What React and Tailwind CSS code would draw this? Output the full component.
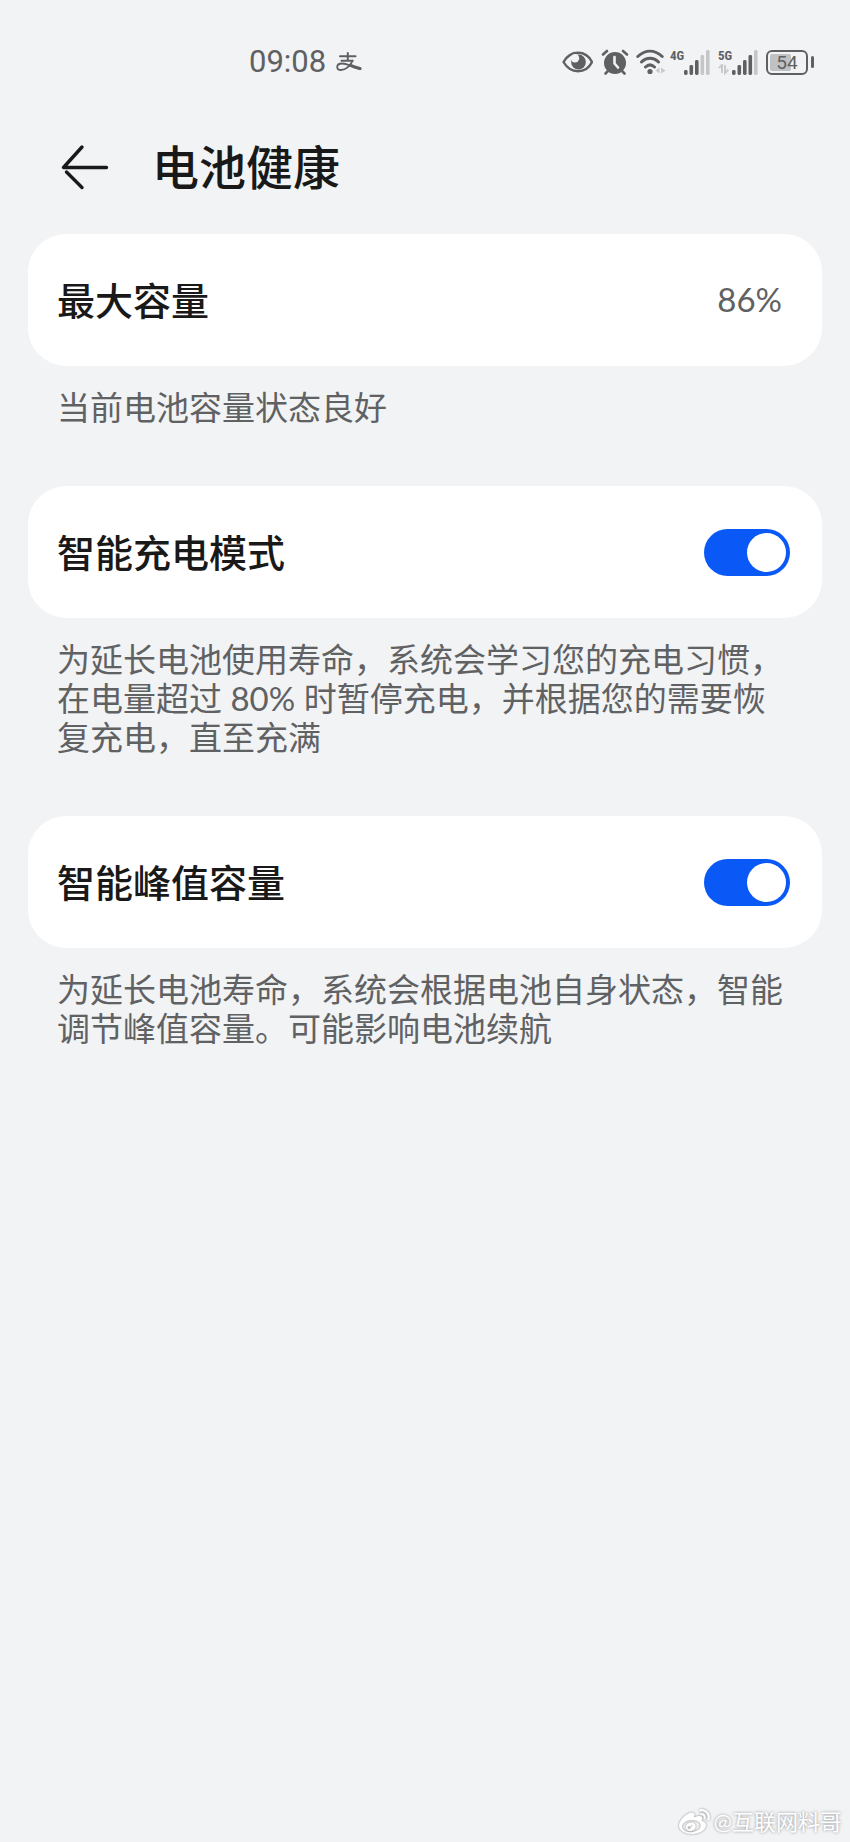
import { useState } from "react";
import { FaWeibo } from "react-icons/fa";

const SignalBars = ({ level }) => (
  <svg
    width="26"
    height="26"
    viewBox="0 0 26 26"
    fill="#5f6062"
    className="shrink-0"
  >
    {[5, 10, 15, 20, 25].map((h, i) => (
      <rect
        key={h}
        x={i * 5.5}
        y={25 - h}
        width="3.6"
        height={h}
        rx="1.4"
        opacity={i < level ? 1 : 0.3}
      />
    ))}
  </svg>
);

const StatusBar = () => (
  <div className="flex h-[124px] items-center justify-between pl-[249px] pr-9 text-[#5f6062]">
    <div className="flex items-center gap-[10px]">
      <span className="font-['Roboto',sans-serif] text-[31px] leading-9">
        09:08
      </span>
      {/* Alipay */}
      <svg
        width="26"
        height="20"
        viewBox="0 0 26 20"
        fill="none"
        stroke="currentColor"
        strokeLinecap="round"
      >
        <path d="M4 4.2H19.5M11.8 1V8.6M5.5 8.7H16.5" strokeWidth="2" />
        <path
          d="M16.6 8.6C14.5 13.5 10 18 5 18C2.6 18 1.2 17 1.2 15C1.2 12.8 3.5 11.5 6.2 11.5C11 11.5 17 15.5 24.5 17"
          strokeWidth="1.8"
        />
        <path d="M14 13.2C17 14.6 20 15.6 24 16.5" strokeWidth="3" />
      </svg>
    </div>

    <div className="flex items-center">
      {/* Eye comfort */}
      <svg width="32" height="24" viewBox="0 0 32 24" fill="none">
        <path
          d="M2.5 12C6 6 11 2.8 17 2.8S28 6 31 12C28 18 23 21.2 17 21.2S6 18 2.5 12Z"
          stroke="currentColor"
          strokeWidth="2.4"
          strokeLinejoin="round"
        />
        <circle cx="17.5" cy="12" r="7.4" fill="currentColor" />
        <circle cx="14" cy="8.2" r="4.2" fill="#f2f3f5" />
      </svg>

      {/* Alarm */}
      <svg width="28" height="28" viewBox="0 0 28 28" className="ml-2">
        <circle cx="14" cy="15" r="11" fill="currentColor" />
        <path
          d="M2 6.5L6 3M26 6.5L22 3M6.5 23.500L4.500 25.500M21.5 23.5L23.5 25.5"
          stroke="currentColor"
          strokeWidth="2.6"
          strokeLinecap="round"
        />
        <path
          d="M13.5 9V15.5L17 19.5"
          fill="none"
          stroke="#f2f3f5"
          strokeWidth="2.6"
          strokeLinecap="round"
          strokeLinejoin="round"
        />
      </svg>

      {/* Wi-Fi */}
      <svg
        width="30"
        height="26"
        viewBox="0 0 30 26"
        fill="none"
        className="ml-[7px]"
      >
        <path
          d="M1.8 7.5C9.5 0.5 18.500 0.5 26.200 7.5M5.500 13C10.500 8 17.5 8 22.500 13M9.500 18C12.500 15.2 15.500 15.2 18.500 18"
          stroke="currentColor"
          strokeWidth="3"
          strokeLinecap="round"
        />
        <circle cx="14" cy="22.500" r="2.600" fill="currentColor" />
        <path
          d="M19.5 21.5L23.500 18.500V24.500ZM29.500 21.500L25 18.500V24.500Z"
          fill="#c9cacc"
        />
      </svg>

      <div className="ml-1 flex h-7 items-end">
        <span className="w-[14px] self-start font-['Roboto_Condensed','Roboto',sans-serif] text-[13px] font-bold leading-4">
          4G
        </span>
        <SignalBars level={3} />
      </div>

      <div className="ml-2 flex h-7 items-end">
        <div className="flex w-[14px] flex-col">
          <span className="font-['Roboto_Condensed','Roboto',sans-serif] text-[13px] font-bold leading-4">
            5G
          </span>
          <svg width="12" height="12" viewBox="0 0 12 12" fill="none">
            <path
              d="M1 4L4 1V9M7 1V9L10.5 5.5"
              stroke="#c9cacc"
              strokeWidth="2"
            />
          </svg>
        </div>
        <SignalBars level={4} />
      </div>

      {/* Battery */}
      <div className="ml-2 flex items-center gap-[3px]">
        <div className="relative h-[25px] w-[42px] overflow-hidden rounded-md border-2 border-[#5f6062]">
          <div
            className="absolute inset-y-[2px] left-[2px] rounded-xs bg-[#c0c1c3]"
            style={{ width: "54%" }}
          />
          <span className="relative block text-center font-['Roboto',sans-serif] text-[19px] leading-[21px]">
            54
          </span>
        </div>
        <div className="h-3 w-[3px] rounded-full bg-[#5f6062]" />
      </div>
    </div>
  </div>
);

const Toggle = ({ id, checked, onChange }) => (
  <input
    id={id}
    type="checkbox"
    role="switch"
    checked={checked}
    onChange={(e) => onChange(e.target.checked)}
    className="h-[47px] w-[86px] shrink-0 cursor-pointer appearance-none rounded-full bg-[#c8c9cc] p-1 transition-colors before:block before:size-[39px] before:rounded-full before:bg-white before:transition-transform checked:bg-[#0a59f7] checked:before:translate-x-[39px]"
  />
);

const Card = ({ children }) => (
  <div className="mx-7 flex h-[132px] items-center justify-between rounded-[38px] bg-white pl-[29px] pr-8 text-[38px] font-medium text-[#191919]">
    {children}
  </div>
);

const Note = ({ children }) => (
  <p className="px-[57px] pb-[59px] pt-[22px] text-[33px] leading-[39px] text-[#606163]">
    {children}
  </p>
);

const App = () => {
  const [smartCharge, setSmartCharge] = useState(true);
  const [peakCapacity, setPeakCapacity] = useState(true);

  return (
    <div
      lang="zh-CN"
      className="flex min-h-screen flex-col bg-[#f2f3f5] font-['Lato','Noto_Sans_CJK_SC',sans-serif]"
    >
      <StatusBar />

      {/* Header */}
      <header className="mb-6 flex h-[86px] items-center gap-[43px] pl-[60px]">
        <button type="button" aria-label="返回" className="cursor-pointer">
          <svg
            width="49"
            height="46"
            viewBox="0 0 49 46"
            fill="none"
            stroke="#191919"
            strokeWidth="3.4"
            strokeLinecap="round"
            strokeLinejoin="round"
          >
            <path d="M22 3L3.5 23.500H46.5M6.5 28L22 43.500" />
          </svg>
        </button>
        <h1 className="text-[47px] font-medium text-[#191919]">电池健康</h1>
      </header>

      <main>
        <Card>
          <span>最大容量</span>
          <span className="pr-2 text-[33px] font-normal text-[#606163]">
            86%
          </span>
        </Card>
        <Note>当前电池容量状态良好</Note>

        <Card>
          <label htmlFor="smart-charge">智能充电模式</label>
          <Toggle
            id="smart-charge"
            checked={smartCharge}
            onChange={setSmartCharge}
          />
        </Card>
        <Note>
          为延长电池使用寿命，系统会学习您的充电习惯，在电量超过 80%
          时暂停充电，并根据您的需要恢复充电，直至充满
        </Note>

        <Card>
          <label htmlFor="peak-capacity">智能峰值容量</label>
          <Toggle
            id="peak-capacity"
            checked={peakCapacity}
            onChange={setPeakCapacity}
          />
        </Card>
        <Note>
          为延长电池寿命，系统会根据电池自身状态，智能调节峰值容量。可能影响电池续航
        </Note>
      </main>

      {/* Watermark */}
      <footer className="mt-auto flex items-center justify-end gap-1 pb-1 pr-2 text-white">
        <FaWeibo size={31} className="drop-shadow-[0_0_1px_#8a8a8a]" />
        <span className="text-[22px] leading-8 [text-shadow:0_0_3px_#8a8a8a]">
          @互联网料哥
        </span>
      </footer>
    </div>
  );
};

export default App;
